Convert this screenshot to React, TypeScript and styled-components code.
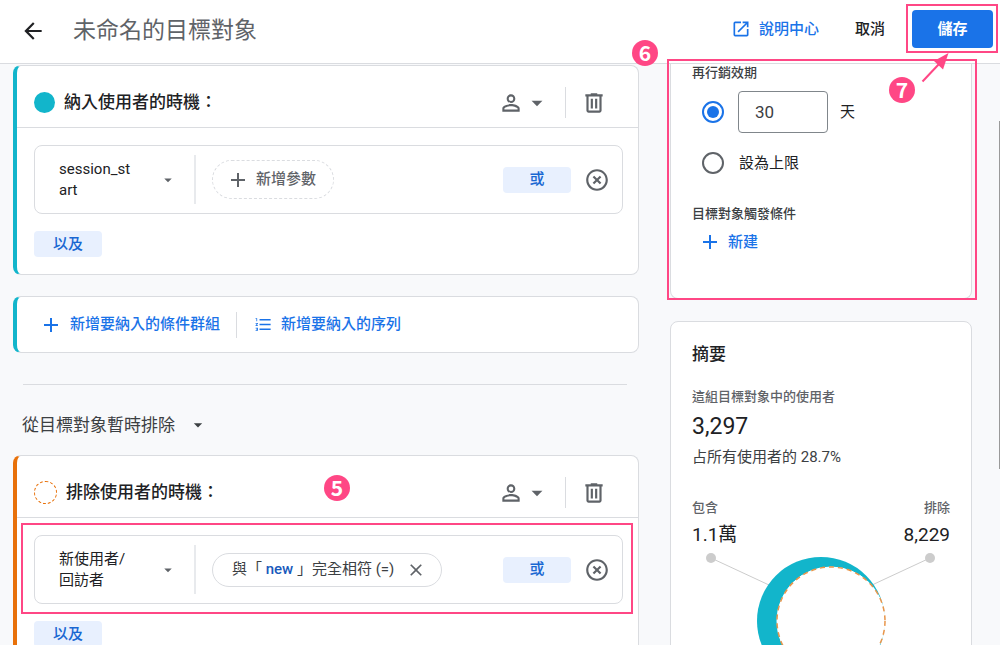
import React from "react";
import styled, { createGlobalStyle } from "styled-components";
import {
  MdAdd,
  MdArrowBack,
  MdArrowDropDown,
  MdClose,
  MdFormatListNumbered,
  MdHighlightOff,
  MdOpenInNew,
  MdPersonOutline,
} from "react-icons/md";

const color = {
  pink: "#ff4785",
  blue: "#1a73e8",
  deepBlue: "#185abc",
  teal: "#12b5cb",
  orange: "#e8710a",
  line: "#dadce0",
  ink: "#202124",
  grey: "#5f6368",
};

const GlobalStyle = createGlobalStyle`
  *, *::before, *::after { box-sizing: border-box; }
  body {
    margin: 0;
    background: #f8f9fb;
    color: ${color.ink};
    font-family: Roboto, "Noto Sans CJK TC", sans-serif;
    font-size: 15px;
    line-height: 21px;
  }
  button, input { font: inherit; color: inherit; }
  button { padding: 0; border: 0; background: none; cursor: pointer; white-space: nowrap; }
  svg { display: block; flex: none; }
  h1, h2, h3, p { margin: 0; font-weight: 400; }
`;

const Page = styled.div`
  position: relative;
  height: 100vh;
  overflow: hidden;
`;

/* Top bar */
const TopBar = styled.header`
  display: flex;
  align-items: center;
  height: 64px;
  padding: 0 7px 5px 20px;
  background: #fff;
  border-bottom: 1px solid ${color.line};
`;

const IconButton = styled.button`
  display: flex;
  align-items: center;
  color: ${color.grey};
`;

const BackButton = styled(IconButton)`
  padding-top: 3px;
  color: ${color.ink};
`;

const PageTitle = styled.h1`
  flex: 1;
  margin-left: 27px;
  padding-top: 3px;
  font-size: 23px;
  line-height: 32px;
  color: ${color.grey};
`;

const HelpLink = styled.a`
  display: flex;
  align-items: center;
  gap: 8px;
  color: ${color.blue};
  font-weight: 500;
  text-decoration: none;
`;

const CancelButton = styled.button`
  margin: 0 27px 0 36px;
  font-weight: 500;
`;

const SaveSlot = styled.div`
  position: relative;
`;

const SaveButton = styled.button`
  width: 81px;
  height: 38px;
  border-radius: 4px;
  background: ${color.blue};
  color: #fff;
  font-weight: 700;
`;

/* Tutorial marks that lie over the interface */
const Frame = styled.div<{ $inset: string }>`
  position: absolute;
  inset: ${(p) => p.$inset};
  border: 2px solid ${color.pink};
  pointer-events: none;
  z-index: 2;
`;

const Step = styled.span<{ $left: string; $top: string }>`
  position: absolute;
  left: ${(p) => p.$left};
  top: ${(p) => p.$top};
  display: flex;
  align-items: center;
  justify-content: center;
  width: 26px;
  height: 26px;
  padding-bottom: 3px;
  border-radius: 50%;
  background: ${color.pink};
  color: #fff;
  font: 700 21px/26px "Noto Sans CJK TC", sans-serif;
  z-index: 3;
`;

const Pointer = styled.svg`
  position: absolute;
  left: 8px;
  top: 42px;
  z-index: 3;
`;

/* Page body */
const Body = styled.div`
  display: flex;
  align-items: flex-start;
  gap: 31px;
  padding: 0 28px 0 13px;
`;

const Main = styled.main`
  flex: 1;
  min-width: 0;
  padding-top: 1px;
`;

const Card = styled.section<{ $accent: string }>`
  position: relative;
  background: #fff;
  border: 1px solid ${color.line};
  border-left: 4px solid ${(p) => p.$accent};
  border-radius: 8px;
`;

const CardHeader = styled.header`
  display: flex;
  align-items: center;
  height: 62px;
  padding: 12px 31px 0 17px;
  border-bottom: 1px solid ${color.line};
`;

const Dot = styled.span<{ $dashed?: boolean }>`
  width: ${(p) => (p.$dashed ? 23 : 21)}px;
  height: ${(p) => (p.$dashed ? 23 : 21)}px;
  border-radius: 50%;
  border: ${(p) => (p.$dashed ? `1px dashed ${color.orange}` : "0")};
  background: ${(p) => (p.$dashed ? "transparent" : color.teal)};
`;

const CardTitle = styled.h2`
  flex: 1;
  margin-left: 9px;
  padding-bottom: 2px;
  font-size: 17px;
  line-height: 24px;
  font-weight: 500;
`;

const Divider = styled.span<{ $height: number; $thick?: boolean }>`
  width: ${(p) => (p.$thick ? 2 : 1)}px;
  height: ${(p) => p.$height}px;
  background: ${(p) => (p.$thick ? "#e8eaed" : color.line)};
`;

const HeaderTools = styled.div`
  display: flex;
  align-items: center;
  gap: 15px;
`;

const CardBody = styled.div`
  padding: 17px 15px 17px 17px;
`;

const Condition = styled.div`
  position: relative;
  display: flex;
  align-items: center;
  height: 69px;
  padding: 0 12px 0 24px;
  border: 1px solid ${color.line};
  border-radius: 8px;
`;

const FieldButton = styled.button`
  display: flex;
  align-items: center;
  gap: 23px;
  margin-right: 17px;
  text-align: left;
  white-space: normal;
  svg { color: ${color.grey}; }
`;

const FieldName = styled.span`
  width: 77px;
  word-break: break-all;
`;

const AddChip = styled.button`
  display: flex;
  align-items: center;
  gap: 6px;
  height: 39px;
  margin-left: 16px;
  padding: 0 17px 0 13px;
  border: 1px dashed ${color.line};
  border-radius: 20px;
  color: ${color.grey};
  font-weight: 500;
`;

const Chip = styled.div`
  display: flex;
  align-items: center;
  gap: 12px;
  height: 34px;
  margin-left: 16px;
  padding: 0 15px 0 19px;
  border: 1px solid ${color.line};
  border-radius: 17px;
  white-space: pre;
  color: #3c4043;
  b { color: ${color.deepBlue}; font-weight: 500; }
`;

const TonalButton = styled.button`
  width: 68px;
  height: 26px;
  border-radius: 4px;
  background: #e8f0fe;
  color: #1967d2;
  font-weight: 500;
`;

const RowActions = styled.div`
  display: flex;
  align-items: center;
  gap: 13px;
  margin-left: auto;
`;

const AndRow = styled.div`
  display: flex;
  margin-top: 17px;
`;

const ActionCard = styled(Card)`
  display: flex;
  align-items: center;
  height: 57px;
  margin-top: 21px;
  padding: 0 22px;
`;

const TextButton = styled.button`
  display: flex;
  align-items: center;
  color: ${color.blue};
  font-weight: 500;
`;

const AddGroup = styled(TextButton)`
  gap: 7px;
  margin-right: 16px;
`;

const AddSequence = styled(TextButton)`
  gap: 8px;
  margin-left: 17px;
`;

const Rule = styled.hr`
  height: 1px;
  margin: 31px 12px 0 10px;
  border: 0;
  background: ${color.line};
`;

const ScopeHeading = styled.button`
  display: flex;
  align-items: center;
  gap: 13px;
  margin: 28px 0 18px 9px;
  font-size: 17px;
  line-height: 24px;
  color: #3c4043;
`;

/* Side column */
const Side = styled.aside`
  flex: 0 0 302px;
  min-width: 0;
`;

const Panel = styled.section<{ $continued?: boolean }>`
  position: relative;
  padding: ${(p) => (p.$continued ? "0 21px 44px" : "20px 21px 0")};
  background: #fff;
  border: 1px solid ${color.line};
  border-top-width: ${(p) => (p.$continued ? 0 : 1)}px;
  border-radius: ${(p) => (p.$continued ? "0 0 8px 8px" : "8px")};
  & + & { margin-top: 22px; }
`;

const Label = styled.h3<{ $muted?: boolean }>`
  font-size: 13px;
  line-height: 18px;
  font-weight: 500;
  color: ${(p) => (p.$muted ? color.grey : "#3c4043")};
`;

const Option = styled.div`
  display: flex;
  align-items: center;
  padding-left: 10px;
`;

const Radio = styled.input`
  appearance: none;
  display: grid;
  place-items: center;
  width: 22px;
  height: 22px;
  margin: 0;
  border: 2px solid ${color.grey};
  border-radius: 50%;
  &:checked { border-color: ${color.blue}; }
  &:checked::after {
    content: "";
    width: 12px;
    height: 12px;
    border-radius: 50%;
    background: ${color.blue};
  }
`;

const DaysInput = styled.input`
  width: 90px;
  height: 42px;
  margin: 0 12px 0 14px;
  padding: 0 16px;
  border: 1px solid #80868b;
  border-radius: 4px;
  background: #fff;
  color: #3c4043;
  font-size: 17px;
`;

const DaysOption = styled(Option)`
  margin: 9px 0 19px;
`;

const LimitOption = styled(Option)`
  margin-bottom: 31px;
  label { margin-left: 15px; }
`;

const NewTrigger = styled(TextButton)`
  gap: 6px;
  margin: 7px 0 0 6px;
`;

const PanelTitle = styled.h2`
  margin-bottom: 22px;
  font-size: 17px;
  line-height: 24px;
  font-weight: 500;
`;

const Total = styled.p`
  margin: 5px 0 4px;
  font-size: 23px;
  line-height: 32px;
`;

const Share = styled.p`
  color: #3c4043;
`;

const Split = styled.div`
  display: flex;
  justify-content: space-between;
  margin: 31px 0 4px;
`;

const Figure = styled.div<{ $end?: boolean }>`
  text-align: ${(p) => (p.$end ? "right" : "left")};
  p { margin-top: 5px; font-size: 19px; line-height: 26px; }
`;

const ScrollThumb = styled.span`
  position: absolute;
  top: 121px;
  right: 0;
  width: 1px;
  height: 348px;
  background: #9a9a9a;
`;

const TrashIcon = () => (
  <svg width="26" height="26" viewBox="0 0 24 24" fill="currentColor" aria-hidden="true">
    <path d="M15 4V3H9v1H4v2h1v13c0 1.1.9 2 2 2h10c1.1 0 2-.9 2-2V6h1V4h-5zm2 15H7V6h10v13zM9 8h2v9H9zm4 0h2v9h-2z" />
  </svg>
);

const OverlapChart = () => (
  <svg width="100%" viewBox="0 0 258 140" role="img" aria-label="包含與排除的使用者">
    <g stroke="#ccc" strokeWidth="1">
      <path d="M19 6 77 33M238 6 180 33" />
    </g>
    <circle cx="19" cy="6" r="5" fill="#ccc" />
    <circle cx="238" cy="6" r="5" fill="#ccc" />
    <circle cx="129" cy="69" r="64" fill={color.teal} />
    <circle cx="139" cy="69" r="54" fill="#fff" stroke="#fff" />
    <circle
      cx="139"
      cy="69"
      r="54"
      fill="none"
      stroke="#e8954a"
      strokeWidth="1.5"
      strokeDasharray="5 4"
    />
  </svg>
);

type GroupProps = {
  title: string;
  field: string;
  exclude?: boolean;
  children: React.ReactNode;
  marks?: React.ReactNode;
  rowMarks?: React.ReactNode;
};

const ConditionGroup = ({ title, field, exclude, children, marks, rowMarks }: GroupProps) => (
  <Card $accent={exclude ? color.orange : color.teal}>
    <CardHeader>
      <Dot $dashed={exclude} />
      <CardTitle>{title}</CardTitle>
      <HeaderTools>
        <IconButton aria-label="條件範圍">
          <MdPersonOutline size={26} />
          <MdArrowDropDown size={26} />
        </IconButton>
        <Divider $height={31} />
        <IconButton aria-label="刪除">
          <TrashIcon />
        </IconButton>
      </HeaderTools>
    </CardHeader>
    <CardBody>
      <Condition>
        <FieldButton>
          <FieldName>{field}</FieldName>
          <MdArrowDropDown size={18} />
        </FieldButton>
        <Divider $height={49} $thick />
        {children}
        <RowActions>
          <TonalButton>或</TonalButton>
          <IconButton aria-label="移除條件">
            <MdHighlightOff size={26} />
          </IconButton>
        </RowActions>
        {rowMarks}
      </Condition>
      <AndRow>
        <TonalButton>以及</TonalButton>
      </AndRow>
    </CardBody>
    {marks}
  </Card>
);

export default function App() {
  return (
    <Page>
      <GlobalStyle />
      <TopBar>
        <BackButton aria-label="返回">
          <MdArrowBack size={26} />
        </BackButton>
        <PageTitle>未命名的目標對象</PageTitle>
        <HelpLink href="#help">
          <MdOpenInNew size={20} />
          說明中心
        </HelpLink>
        <CancelButton>取消</CancelButton>
        <SaveSlot>
          <SaveButton>儲存</SaveButton>
          <Frame $inset="-6px -5px -5px -6px" />
          <Step $left="-23px" $top="67px">7</Step>
          <Pointer width="30" height="32" viewBox="0 0 30 32" aria-hidden="true">
            <path d="M2.500 29.500 19 12" stroke={color.pink} strokeWidth="2" />
            <path d="M28.500 1 14 9 23 17.500z" fill={color.pink} />
          </Pointer>
        </SaveSlot>
      </TopBar>

      <Body>
        <Main>
          <ConditionGroup title="納入使用者的時機：" field="session_start">
            <AddChip>
              <MdAdd size={24} />
              新增參數
            </AddChip>
          </ConditionGroup>

          <ActionCard $accent={color.teal}>
            <AddGroup>
              <MdAdd size={24} />
              新增要納入的條件群組
            </AddGroup>
            <Divider $height={26} />
            <AddSequence>
              <MdFormatListNumbered size={19} />
              新增要納入的序列
            </AddSequence>
          </ActionCard>

          <Rule />
          <ScopeHeading>
            從目標對象暫時排除
            <MdArrowDropDown size={20} />
          </ScopeHeading>

          <ConditionGroup
            title="排除使用者的時機："
            field="新使用者/回訪者"
            exclude
            marks={<Step $left="307px" $top="19px">5</Step>}
            rowMarks={<Frame $inset="-13px -11px -11px -14px" />}
          >
            <Chip>
              <span>
                與「 <b>new</b> 」完全相符 (=)
              </span>
              <IconButton aria-label="清除">
                <MdClose size={20} />
              </IconButton>
            </Chip>
          </ConditionGroup>
        </Main>

        <Side>
          <Panel $continued>
            <Label>再行銷效期</Label>
            <DaysOption>
              <Radio type="radio" name="duration" aria-label="天數" defaultChecked />
              <DaysInput id="days" defaultValue="30" />
              <label htmlFor="days">天</label>
            </DaysOption>
            <LimitOption>
              <Radio type="radio" name="duration" id="limit" />
              <label htmlFor="limit">設為上限</label>
            </LimitOption>
            <Label>目標對象觸發條件</Label>
            <NewTrigger>
              <MdAdd size={24} />
              新建
            </NewTrigger>
            <Frame $inset="-5px -6px -2px -4px" />
            <Step $left="-39px" $top="-24px">6</Step>
          </Panel>

          <Panel>
            <PanelTitle>摘要</PanelTitle>
            <Label $muted>這組目標對象中的使用者</Label>
            <Total>3,297</Total>
            <Share>占所有使用者的 28.7%</Share>
            <Split>
              <Figure>
                <Label $muted>包含</Label>
                <p>1.1萬</p>
              </Figure>
              <Figure $end>
                <Label $muted>排除</Label>
                <p>8,229</p>
              </Figure>
            </Split>
            <OverlapChart />
          </Panel>
        </Side>
      </Body>
      <ScrollThumb />
    </Page>
  );
}
